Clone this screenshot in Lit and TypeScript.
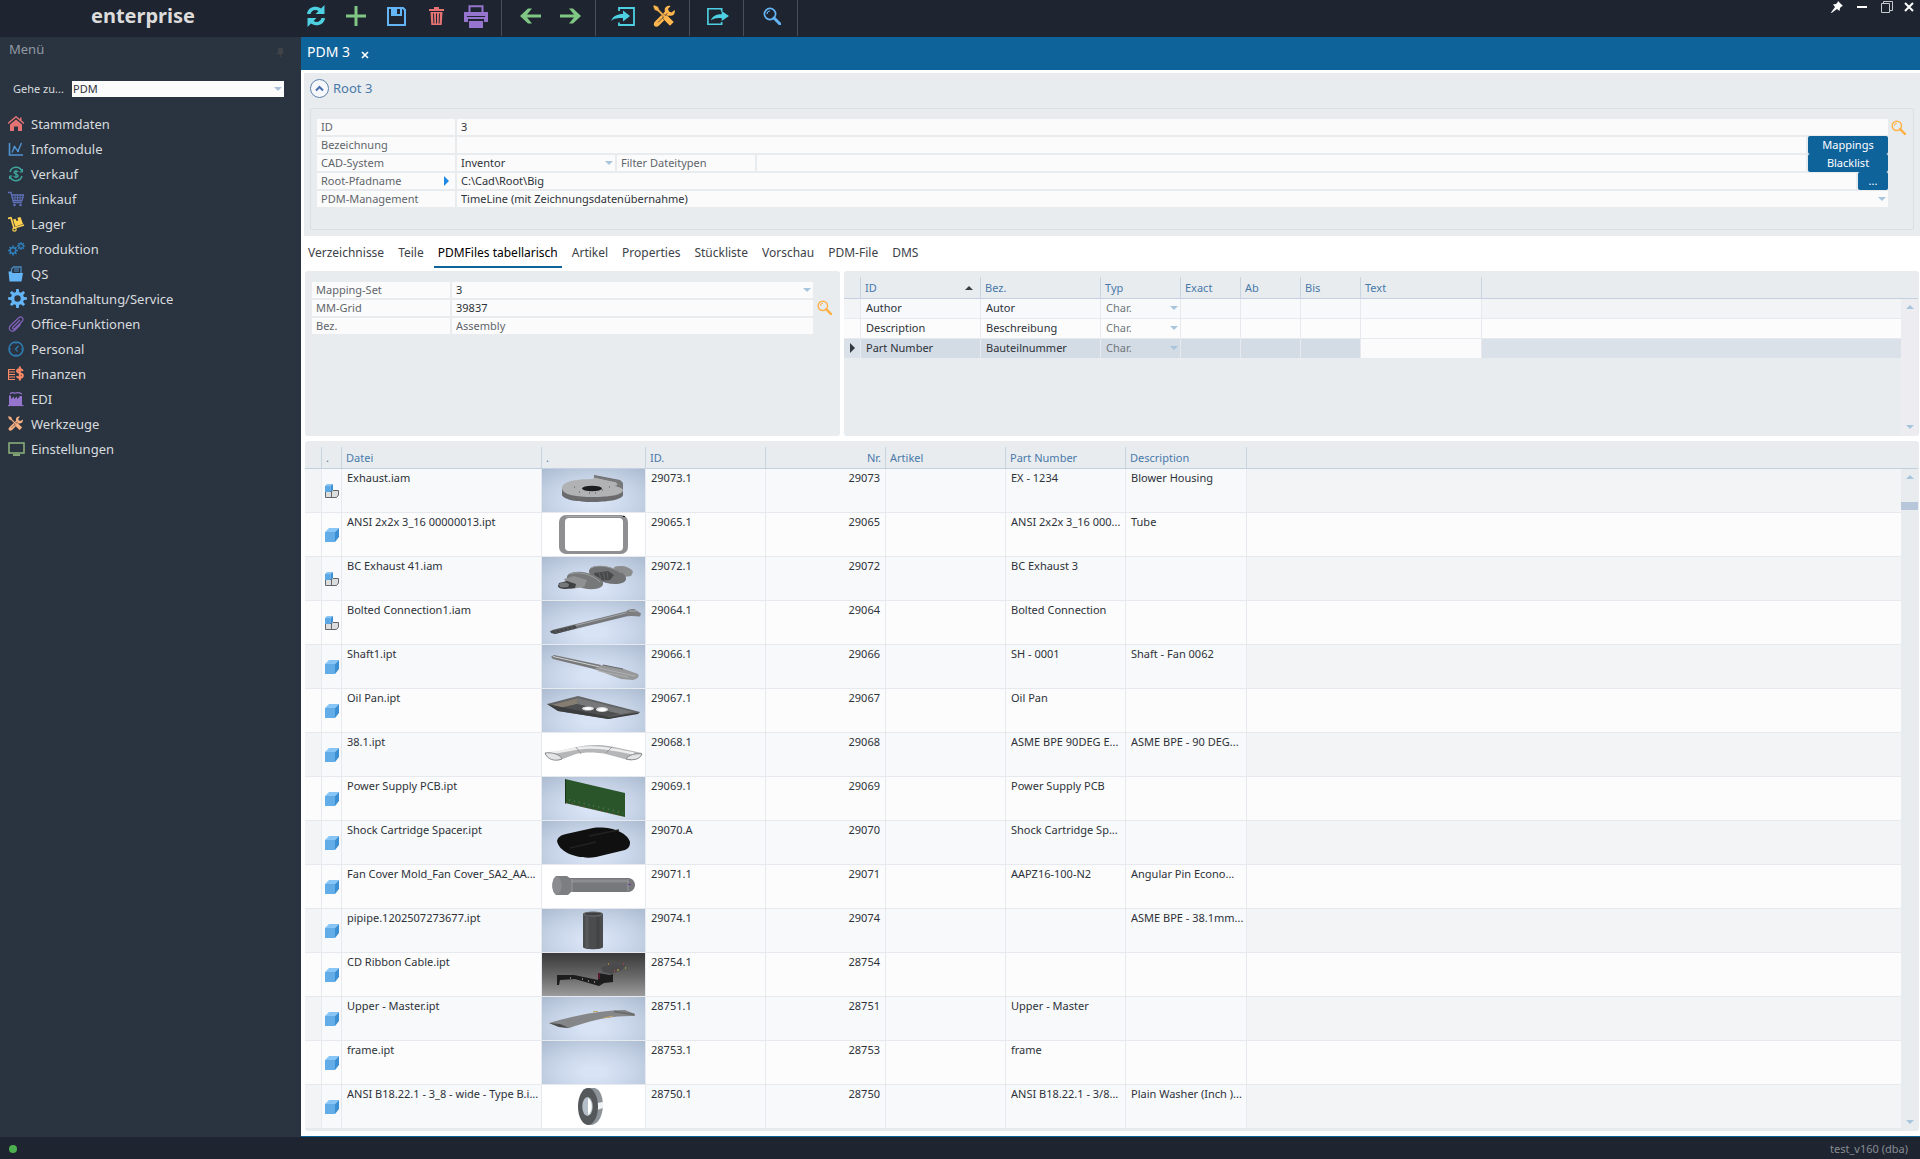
import { LitElement, html, svg, css, nothing } from "lit";
import { customElement, state } from "lit/decorators.js";
import { classMap } from "lit/directives/class-map.js";

/** Builds a toothed wheel outline with a round hole (even-odd fill). */
function gear(cx: number, cy: number, outer: number, inner: number, hole: number, teeth: number): string {
  const step = (Math.PI * 2) / teeth;
  const pts: string[] = [];
  for (let i = 0; i < teeth; i++) {
    const a = i * step - Math.PI / 2;
    for (const [r, o] of [[inner, -0.3], [outer, -0.18], [outer, 0.18], [inner, 0.3]]) {
      pts.push(`${(cx + r * Math.cos(a + o * step)).toFixed(2)} ${(cy + r * Math.sin(a + o * step)).toFixed(2)}`);
    }
  }
  return `M${pts.join("L")}Z M${cx - hole} ${cy}a${hole} ${hole} 0 1 0 ${hole * 2} 0a${hole} ${hole} 0 1 0 ${-hole * 2} 0Z`;
}

const toolsShape = svg`
  <path d="M21.500 5l-3 2.500-2.500-1-1-2.500L17.500 1c-3.500-1-7 2-5.500 5.500L2 16.500c-1.500 1.500-1.500 3.500-.5 4.500s3 1 4.500-.5l10-10c3.500 1.500 7-2 5.500-5.500z" fill="currentColor"/>
  <path d="M5 17.500l9.500-9.500" stroke="#1f2530" stroke-width="0.700" fill="none"/>
  <path d="M1 0l4 1.500 1.500 3.500 5.500 5.500 1.500-.5 1.500 1 6 6-4 4-6-6-1-1.500.5-1.500L5 6.500 1.500 5 0 1z" fill="currentColor" stroke="#1f2530" stroke-width="0.500"/>`;

const glass = svg`
  <circle cx="7" cy="7" r="5.600" fill="none" stroke="currentColor" stroke-width="1.700"/>
  <path d="M4 7a3 3 0 0 1 3-3" fill="none" stroke="currentColor" stroke-width="1.200"/>
  <path d="M11 11l6 6" stroke="currentColor" stroke-width="3" stroke-linecap="round"/>`;

const icon = (w: number, h: number, box: string, color: string, body: unknown) =>
  html`<svg width=${w} height=${h} viewBox=${box} style="color:${color}" aria-hidden="true">${body}</svg>`;

const caret = (dir: "down" | "up" | "right", cls = "caret") => {
  const d = { down: "M0 1h8l-4 4z", up: "M0 5h8l-4-4z", right: "M1 0v10l5-5z" }[dir];
  return html`<svg class=${cls} width=${dir === "right" ? 6 : 8} height=${dir === "right" ? 10 : 6} aria-hidden="true"><path d=${d} fill="currentColor"/></svg>`;
};

const base = css`
  * { box-sizing: border-box; }
  button, input, select { font: inherit; color: inherit; margin: 0; padding: 0; border: 0; background: none; border-radius: 0; outline-offset: -1px; }
  button { cursor: pointer; }
  select { appearance: none; min-width: 0; }
  svg { display: block; flex: none; }
`;

interface Tool { label: string; art: unknown; }

@customElement("app-toolbar")
export class AppToolbar extends LitElement {
  static styles = [base, css`
    :host { display: flex; height: 37px; background: #1f2530; color: #fff; }
    .brand { width: 288px; padding-right: 2px; text-align: center; font: 700 20px/32px "Noto Sans", "Open Sans", sans-serif; color: #dcdcdc; }
    .group { display: flex; padding: 0 5px 0 8px; border-right: 1px solid #4a4f59; height: 36px; }
    .tool { width: 40px; height: 34px; display: grid; place-items: center; padding-bottom: 2px; }
    .window { margin-left: auto; display: flex; align-items: flex-start; padding-right: 1px; }
    .window button { width: 25px; height: 14px; display: grid; place-items: center; }
    .window .last { width: 20px; }
  `];

  private groups: Tool[][] = [
    [
      { label: "Aktualisieren", art: icon(20, 22, "0 0 20 22", "#4dd0e1", svg`
        <path d="M1 9C2 1.500 10 0 15 3.500L18.500 0v9h-9l3-3C9 4 5.500 5.500 4.500 9z" fill="currentColor"/>
        <path d="M19 13c-1 7.500-9 9-14 5.500L1.500 22v-9h9l-3 3c3.500 2 7 .5 8-3z" fill="currentColor"/>`) },
      { label: "Neu", art: icon(20, 20, "0 0 20 20", "#81c784", svg`<path d="M8.500 0h3v8.500H20v3h-8.500V20h-3v-8.500H0v-3h8.500z" fill="currentColor"/>`) },
      { label: "Speichern", art: icon(19, 19, "0 0 19 19", "#64b5f6", svg`
        <path d="M1 1h15l2 2v15H1z" fill="none" stroke="currentColor" stroke-width="2"/>
        <path d="M4 1h11v8H4z" fill="currentColor"/><path d="M10 2h3v5h-3z" fill="#1f2530"/>`) },
      { label: "Löschen", art: icon(15, 20, "0 0 15 20", "#e57373", svg`
        <path d="M0 3h15v2H0z M5 1h5v2H5z" fill="currentColor"/>
        <path d="M1.500 6h12l-.8 13H2.300z" fill="currentColor"/>
        <path d="M4.500 7.500l.4 10M7.500 7.500v10M10.500 7.500l-.4 10" stroke="#1f2530" stroke-width="1"/>`) },
      { label: "Drucken", art: icon(24, 23, "0 0 24 23", "#9575cd", svg`
        <path d="M5.500 7V1.200h13V7" fill="none" stroke="currentColor" stroke-width="2"/>
        <path d="M0 7h24v10h-4v-3H4v3H0z M5 16h14v7H5z" fill="currentColor"/>
        <path d="M3 11.500h18" stroke="#1f2530" stroke-width="1"/>`) },
    ],
    [
      { label: "Zurück", art: icon(21, 16, "0 0 21 16", "#81c784", svg`<path d="M21 6.500v3H7l5 6H8L0 8l8-7.500h4l-5 6z" fill="currentColor"/>`) },
      { label: "Vor", art: icon(21, 16, "0 0 21 16", "#81c784", svg`<path d="M0 6.500v3h14l-5 6h4L21 8 13 .5H9l5 6z" fill="currentColor"/>`) },
    ],
    [
      { label: "Importieren", art: icon(26, 19, "0 0 26 19", "#4dd0e1", svg`
        <path d="M8 4V1h15v17H8v-2.500" fill="none" stroke="currentColor" stroke-width="1.800"/>
        <path d="M0 14c2-5 6-7 12-7V3.500L19 9l-7 5.500V11c-5 0-9 0-12 3z" fill="currentColor"/>`) },
      { label: "Werkzeuge", art: icon(22, 22, "0 0 22 22", "#ffb74d", toolsShape) },
    ],
    [
      { label: "Exportieren", art: icon(22, 19, "0 0 24 19", "#4dd0e1", svg`
        <path d="M16 4V1H1v17h15v-2.500" fill="none" stroke="currentColor" stroke-width="1.800"/>
        <path d="M4 14c2-5 6-7 12-7V3.500L24 9l-8 5.500V11c-5 0-9 0-12 3z" fill="currentColor"/>`) },
    ],
    [{ label: "Suchen", art: icon(18, 18, "0 0 18 18", "#64b5f6", glass) }],
  ];

  render() {
    return html`
      <div class="brand">enterprise</div>
      ${this.groups.map((g) => html`<div class="group">
        ${g.map((t) => html`<button class="tool" aria-label=${t.label}>${t.art}</button>`)}
      </div>`)}
      <div class="window">
        <button aria-label="Anheften">${icon(12, 12, "0 0 12 12", "#fff", svg`<path d="M7 0l5 5-1.500.5-1.500 1.500-.5 3L6 8 .5 12 0 11.500 4 6 2 3.500l3-.5 1.500-1.500z" fill="currentColor"/>`)}</button>
        <button aria-label="Minimieren">${icon(10, 12, "0 0 10 12", "#fff", svg`<path d="M0 5h10v2H0z" fill="currentColor"/>`)}</button>
        <button aria-label="Wiederherstellen">${icon(12, 12, "0 0 12 12", "#c8cacd", svg`<path d="M.5 2.500h8v9h-8z M2.500 2.500v-2h9v9h-3" fill="none" stroke="currentColor"/>`)}</button>
        <button class="last" aria-label="Schließen">${icon(10, 10, "0 0 10 10", "#fff", svg`<path d="M1 1l8 8M9 1l-8 8" stroke="currentColor" stroke-width="2"/>`)}</button>
      </div>`;
  }
}

@customElement("app-sidebar")
export class AppSidebar extends LitElement {
  static styles = [base, css`
    :host { display: block; background: #2a3441; color: #d9dcdf; font-size: 13px; line-height: 20px; }
    .title { display: flex; justify-content: space-between; align-items: flex-start; padding: 2px 17px 0 9px; color: #9299a1; height: 26px; margin: 0; font-weight: 400; font-size: 13px; }
    .pin { padding-top: 9px; }
    .goto { display: flex; align-items: center; padding: 18px 17px 0 13px; font-size: 11px; line-height: 16px; }
    .goto label { width: 59px; }
    .pick { flex: 1; display: flex; align-items: center; background: #fbfbfb; color: #2d3238; height: 16px; padding-right: 2px; }
    .pick select { flex: 1; height: 16px; padding-left: 1px; }
    .caret { color: #a9c2da; }
    ul { list-style: none; margin: 0; padding: 14px 0 0; }
    a { display: flex; align-items: center; height: 25px; padding-left: 7px; color: inherit; text-decoration: none; }
    .glyph { width: 24px; height: 21px; display: grid; place-items: center; justify-items: start; padding-left: 1px; }
  `];

  private items: [string, unknown][] = [
    ["Stammdaten", icon(16, 16, "0 0 16 16", "#e57373", svg`
      <path d="M0 7.500L8 .8l8 6.700M12.800 4.500V1.500" fill="none" stroke="currentColor" stroke-width="1.500"/>
      <path d="M2 8.500l6-5 6 5V15H10v-4.500H6V15H2z" fill="currentColor"/>`)],
    ["Infomodule", icon(16, 16, "0 0 16 16", "#4f93d2", svg`
      <path d="M1.500 2v12H15" fill="none" stroke="currentColor" stroke-width="1.600"/>
      <path d="M4 11.500L6.500 6l3.500 4 3.500-8" fill="none" stroke="currentColor" stroke-width="1.400"/>
      <circle cx="6.500" cy="6" r="1.200" fill="currentColor"/><circle cx="10" cy="10" r="1.200" fill="currentColor"/>`)],
    ["Verkauf", icon(16, 16, "0 0 16 16", "#3fa79e", svg`
      <path d="M2 6a6.300 6.300 0 0 1 12-.5M14 10a6.300 6.300 0 0 1-12 .5" fill="none" stroke="currentColor" stroke-width="1.500"/>
      <path d="M14.500 3v3h-3M1.500 13v-3h3" fill="none" stroke="currentColor"/>
      <path d="M10.200 6C9.500 4.800 6 4.800 6 6.400S10.200 8 10.200 9.800 6.800 11.500 5.600 10.300M8 3.800v8.500" fill="none" stroke="currentColor" stroke-width="1.200"/>`)],
    ["Einkauf", icon(16, 16, "0 0 16 16", "#5f70b8", svg`
      <path d="M0 1.500h3l2.500 10H14M4 4h11.500L14 9.500H5.500" fill="none" stroke="currentColor" stroke-width="1.300"/>
      <path d="M7 4v6M9.500 4v6M12 4v6M4.500 6.700H15" stroke="currentColor" stroke-width="0.900"/>
      <circle cx="6.500" cy="14" r="1.300" fill="currentColor"/><circle cx="12.500" cy="14" r="1.300" fill="currentColor"/>`)],
    ["Lager", icon(17, 16, "0 0 17 16", "#fdd04e", svg`
      <path d="M0 2.500l3-.8L6 12l10-3" fill="none" stroke="currentColor" stroke-width="1.700"/>
      <circle cx="6.500" cy="13.500" r="1.700" fill="none" stroke="currentColor" stroke-width="1.200"/>
      <path d="M5 3.500l2.500-.8 1 2.200 1.700-.5-.8-2.600L12.500 1l2.500 7L7.300 10.500z" fill="currentColor"/>`)],
    ["Produktion", icon(17, 16, "0 0 17 16", "#2f80bd", svg`
      <path fill-rule="evenodd" d=${gear(5, 9.5, 5, 3.6, 2, 8)} fill="currentColor"/>
      <path fill-rule="evenodd" d=${gear(13, 5, 4, 2.8, 1.6, 8)} fill="currentColor"/>`)],
    ["QS", icon(16, 16, "0 0 16 16", "#64b5f6", svg`
      <path d="M3.500 6V3l2-2h7.500v6" fill="none" stroke="#4b89c0" stroke-width="1.300"/>
      <path d="M6 3h5M6 5h5" stroke="#4b89c0"/>
      <path d="M.5 5.500h3l1 1.500H15l-1.500 8.500h-12z" fill="currentColor"/>`)],
    ["Instandhaltung/Service", icon(19, 19, "0 0 19 19", "#64b5f6", svg`<path fill-rule="evenodd" d=${gear(9.5, 9.5, 9.5, 6.6, 3.2, 8)} fill="currentColor"/>`)],
    ["Office-Funktionen", icon(16, 16, "0 0 16 16", "#8563bd", svg`
      <path d="M12 4l-7 7c-1.500 1.500.5 3 2 1.500l7-7c2.500-3-.5-6-3.500-3.500L2.500 9.500c-3.500 4 1.500 7.500 4.500 4.500l5.500-5.500" fill="none" stroke="currentColor" stroke-width="1.200"/>`)],
    ["Personal", icon(16, 16, "0 0 16 16", "#2f7fb8", svg`
      <circle cx="8" cy="8" r="7" fill="none" stroke="currentColor" stroke-width="1.500"/>
      <path d="M10.500 5L7.500 8l2 2.500" fill="none" stroke="currentColor" stroke-width="1.200"/>
      <path d="M8 2v1M8 13v1M2 8h1M13 8h1" stroke="currentColor"/>`)],
    ["Finanzen", icon(16, 16, "0 0 16 16", "#ff8a65", svg`
      <path d="M0 3.500h7M0 6h7M0 8.500h7M0 11h7M0 13.500h7M.5 3v11" stroke="currentColor" stroke-width="1.200"/>
      <path d="M14.800 5C13.500 2.500 8.800 3 9 5.200s5.800 1.500 5.800 4.300-4.800 2.800-6.200.8M11.800.5v14" fill="none" stroke="currentColor" stroke-width="2"/>`)],
    ["EDI", icon(16, 16, "0 0 16 16", "#9575cd", svg`
      <path d="M0 14.500h15.500" stroke="currentColor" stroke-width="1.200"/>
      <path d="M1 14V4.500h2V8l3-2.500V8l3-2.500V8l2.500-2V5H14v9z" fill="currentColor"/>
      <path d="M2 3c2-3 4 0 6-1s4 0 6 1" fill="none" stroke="currentColor" stroke-width="1.200"/>`)],
    ["Werkzeuge", icon(15, 15, "0 0 22 22", "#f7b183", toolsShape)],
    ["Einstellungen", icon(17, 16, "0 0 17 16", "#8fb27c", svg`
      <path d="M1 2h15v10H1z" fill="none" stroke="currentColor" stroke-width="1.500"/><path d="M5 14h7" stroke="currentColor" stroke-width="1.800"/>`)],
  ];

  render() {
    return html`
      <h2 class="title">Menü <span class="pin">${icon(8, 9, "0 0 8 9", "#3f4247", svg`<path d="M2 0h5v5h1v1H5v3H4V6H0V5h2z" fill="currentColor"/>`)}</span></h2>
      <div class="goto">
        <label for="goto">Gehe zu...</label>
        <span class="pick"><select id="goto"><option>PDM</option></select>${caret("down")}</span>
      </div>
      <nav><ul>
        ${this.items.map(([name, art]) => html`<li><a href="#"><span class="glyph">${art}</span>${name}</a></li>`)}
      </ul></nav>`;
  }
}

const mist = "mist", plain = "plain", night = "night";

interface FileRow {
  kind: "iam" | "ipt"; file: string; id: string; nr: string; part: string; desc: string; tone: string; art: unknown;
}

const files: FileRow[] = [
  { kind: "iam", file: "Exhaust.iam", id: "29073.1", nr: "29073", part: "EX - 1234", desc: "Blower Housing", tone: mist, art: svg`
    <path d="M20 19v7c2 5 16 7 30 7s30-2 31-7V14l-3-3-26-5v4z" fill="#6b6b6d"/>
    <path d="M20 19c0-6 12-9 31-9l1-2 22 5 2 3-3 1c6 1 8 3 8 4 0 5-14 7-30 7S20 26 20 19z" fill="#b1b2b4"/>
    <path d="M52 6.500l26 5 3 3v6l-5-4-1-3-23-5z" fill="#77787a"/>
    <ellipse cx="50" cy="19.500" rx="10" ry="2.800" fill="#1d1d1e"/>
    <path d="M32 18h1M37 23h1M47 24h1M53 24h1M67 18h1M60 21h1" stroke="#555"/>` },
  { kind: "ipt", file: "ANSI 2x2x 3_16 00000013.ipt", id: "29065.1", nr: "29065", part: "ANSI 2x2x 3_16 000...", desc: "Tube", tone: plain, art: svg`
    <rect x="17" y="2" width="69" height="39" rx="7" fill="#8f8f91"/><rect x="23" y="5" width="58" height="33" rx="4" fill="#fff"/>
    <path d="M24 3.500h55" stroke="#a9a9aa"/><path d="M81 3.500h2" stroke="#111"/>` },
  { kind: "iam", file: "BC Exhaust 41.iam", id: "29072.1", nr: "29072", part: "BC Exhaust 3", desc: "", tone: mist, art: svg`
    <path d="M72 10c6-2 16-1 19 5l-2 4-14 2z" fill="#8b8c8e"/>
    <ellipse cx="65.500" cy="18" rx="19" ry="8" transform="rotate(14 65.500 18)" fill="#707173"/>
    <path d="M49 11c8-4 22-1 30 5" fill="none" stroke="#929395"/>
    <path d="M52 16l14-2 6 4-4 5-14 1z" fill="#48494b"/><path d="M57 15l2 8M61 15l2 8M65 15l1 7" stroke="#66676a" stroke-width="0.800"/>
    <ellipse cx="43" cy="23.500" rx="18.500" ry="8" transform="rotate(12 43 23.500)" fill="#77787a"/>
    <path d="M28 17c8-3 22 0 30 8" fill="none" stroke="#9b9c9e"/>
    <path d="M22 22l10-3 13 4-3 7-14 2z" fill="#8f9092"/><path d="M17 26l8-2 9 3-1 4-9 1c-5 0-8-1-8-3z" fill="#3f4042"/>
    <ellipse cx="22" cy="28" rx="5" ry="2.500" fill="#77787a"/>` },
  { kind: "iam", file: "Bolted Connection1.iam", id: "29064.1", nr: "29064", part: "Bolted Connection", desc: "", tone: mist, art: svg`
    <path d="M10 29l74-18.500 4 4L13 33z" fill="#75777a"/><path d="M11 30l75-18.500" stroke="#a4a6a9" stroke-width="1"/>
    <path d="M8 30l25-6 2 3-22 6-4-1z" fill="#47484a"/><path d="M13 29l2 4M17 28l2 4M21 27l2 4M25 26l2 4M29 25l2 4" stroke="#66676a" stroke-width="0.700"/>
    <path d="M84 10.500c2-2 6-3 9-2l6 4-1 3c-4 0-8-1-12 0z" fill="#7d7e80"/><path d="M87 10h8" stroke="#aaa"/>` },
  { kind: "ipt", file: "Shaft1.ipt", id: "29066.1", nr: "29066", part: "SH - 0001", desc: "Shaft - Fan 0062", tone: mist, art: svg`
    <path d="M9 12l3-2 47 10-3 5L11 14z" fill="#77787a"/><path d="M11 11.500l47 10.500" stroke="#d0d1d3"/>
    <path d="M52 24l8-4 22 4 14 5c2 3-1 5-5 6l-12-1z" fill="#97989a"/><path d="M57 23l36 8M56 26l30 6" stroke="#b4b5b7" stroke-width="0.800"/><path d="M61 20l20 4" stroke="#66676a"/>` },
  { kind: "ipt", file: "Oil Pan.ipt", id: "29067.1", nr: "29067", part: "Oil Pan", desc: "", tone: mist, art: svg`
    <path d="M5 15l31-8 62 16-31 7L16 22z" fill="#636466"/><path d="M10 16l26-7-1 6-21 5z" fill="#857c72"/><path d="M36 9l55 14-13 2-43-10z" fill="#77787a"/>
    <path d="M14 20l21-5 43 10-14 3z" fill="#4e4f51"/><path d="M5 15l62 13 31-5-2 2-30 5L16 22z" fill="#3c3d3f"/>
    <ellipse cx="46" cy="19.500" rx="6" ry="2" fill="#dcdcdc"/><ellipse cx="46" cy="19.500" rx="3.500" ry="1.300" fill="#fff"/>
    <ellipse cx="60" cy="20.500" rx="6" ry="2.500" fill="#dcdcdc"/><ellipse cx="60" cy="20.500" rx="4" ry="1.500" fill="#fff"/>` },
  { kind: "ipt", file: "38.1.ipt", id: "29068.1", nr: "29068", part: "ASME BPE 90DEG E...", desc: "ASME BPE - 90 DEG...", tone: plain, art: svg`
    <path d="M3 20c10-1 20-3 32-6 11-2 22-3 37 0l28 6c0 5-7 8-14 7l-22-6c-10-2-22-2-30 0l-16 6c-8 1-13-2-15-7z" fill="#b5b6b8"/>
    <path d="M8 20c18-2 24-5 38-5.500s26 2 46 6" fill="none" stroke="#ededed" stroke-width="2.500"/>
    <path d="M3 20c6-1 15 1 17 6-8 3-15 0-17-6zM100 21c-6-1-14 1-16 5 8 2 14 0 16-5z" fill="#e3e4e6" stroke="#77787a" stroke-width="0.800"/>
    <path d="M34 14l5 7M64 20l6-6" stroke="#8b8c8e" stroke-width="0.800"/>` },
  { kind: "ipt", file: "Power Supply PCB.ipt", id: "29069.1", nr: "29069", part: "Power Supply PCB", desc: "", tone: mist, art: svg`
    <path d="M23 2l60 14v24L23 26z" fill="#2a5429"/><path d="M23.500 2.500v24" stroke="#173417"/>
    <path d="M24 25.500l58 14" stroke="#b04a43" stroke-width="1" stroke-dasharray="1 5"/><path d="M27 23l54 13" stroke="#4f744e" stroke-dasharray="1 4" stroke-width="2"/>` },
  { kind: "ipt", file: "Shock Cartridge Spacer.ipt", id: "29070.A", nr: "29070", part: "Shock Cartridge Sp...", desc: "", tone: mist, art: svg`
    <path d="M15 20c1-4 4-6 9-7l27-6c17-2 34 4 37 14 0 4-1 6-5 8l-29 7c-16 3-37-4-39-16z" fill="#101011"/>
    <path d="M47 15l30-6M28 27l26-6" stroke="#222223" stroke-width="1.500"/>` },
  { kind: "ipt", file: "Fan Cover Mold_Fan Cover_SA2_AA...", id: "29071.1", nr: "29071", part: "AAPZ16-100-N2", desc: "Angular Pin Econo...", tone: plain, art: svg`
    <path d="M26 13h61c4 1 6 4 6 7s-2 6-6 7H26z" fill="#77787b"/><path d="M28 16h58" stroke="#8b8c8f" stroke-width="3"/>
    <path d="M14 11h11l4 3v13l-3 3H14c-5-4-5-15 0-19z" fill="#7d7e82"/><ellipse cx="15" cy="20.500" rx="4.500" ry="9" fill="#8b8c90"/>
    <path d="M86 14v12M30 14v13" stroke="#98999c"/><path d="M86 19.500h3" stroke="#6d3f9a"/>` },
  { kind: "ipt", file: "pipipe.1202507273677.ipt", id: "29074.1", nr: "29074", part: "", desc: "ASME BPE - 38.1mm...", tone: mist, art: svg`
    <path d="M41 5c0-3 20-3 20 0v33c0 3-20 3-20 0z" fill="#4b4c4d"/><path d="M45 8v31" stroke="#58595b" stroke-width="3"/><path d="M56 8v31" stroke="#424344" stroke-width="3"/>
    <ellipse cx="51" cy="5" rx="9.500" ry="2" fill="#3f4041" stroke="#77787a" stroke-width="0.800"/>` },
  { kind: "ipt", file: "CD Ribbon Cable.ipt", id: "28754.1", nr: "28754", part: "", desc: "", tone: night, art: svg`
    <path d="M15 22h17l24 5V20l12 2 3-1v8l-9 1-5 3-24-7-15 1-1 5h-2z" fill="#1d1d1e"/>
    <path d="M59 15c5-4 17-5 25-4l-4 6-11 4-8-2z" fill="#4b4b4d"/><path d="M57 20v6" stroke="#93154a"/><path d="M66 11h1M75 17h2M83 15h1" stroke="#e2b93f"/><path d="M72 18h1M81 11h1" stroke="#d2453c"/>
    <path d="M28 25h1M40 26h1M46 28h1M52 29h1" stroke="#ddd"/>` },
  { kind: "ipt", file: "Upper - Master.ipt", id: "28751.1", nr: "28751", part: "Upper - Master", desc: "", tone: mist, art: svg`
    <path d="M7 26c20-6 50-13 76-13l10 4v2c-24-1-45 5-66 12l-10-1z" fill="#858687"/><path d="M7 26l10 4 10 1-9-4z" fill="#4b4c4d"/>
    <path d="M72 14.500l20 3" stroke="#6c6d6e" stroke-width="2"/><path d="M51 14.500h5M62 21l9-2" stroke="#c6a969"/>` },
  { kind: "ipt", file: "frame.ipt", id: "28753.1", nr: "28753", part: "frame", desc: "", tone: mist, art: nothing },
  { kind: "ipt", file: "ANSI B18.22.1 - 3_8 - wide - Type B.i...", id: "28750.1", nr: "28750", part: "ANSI B18.22.1 - 3/8...", desc: "Plain Washer (Inch )...", tone: plain, art: svg`
    <path d="M46 3h7c11 3 11 34-3 37h-5z" fill="#8d9499"/><path d="M55 18l6-1v6l-6 2z" fill="#f0f3f5"/>
    <ellipse cx="46" cy="21.500" rx="10" ry="18.500" fill="#55585b"/><ellipse cx="45.500" cy="21.500" rx="5.200" ry="9.500" fill="#b4bfc9"/><path d="M46 13c5 3 5 14 0 17z" fill="#fff"/>` },
];

const partIcon = icon(14, 14, "0 0 14 14", "#64b0ea", svg`
  <path d="M0 4h10v10H0z" fill="#62ade8"/><path d="M0 4L4 0h10l-4 4z" fill="#87c5f7"/><path d="M10 4l4-4v9l-4 5z" fill="#3b8fd2"/>`);
const assemblyIcon = icon(14, 14, "0 0 14 14", "#63676b", svg`
  <path d="M7 7.500L8 6.500h5.500V11L11.500 13.500H.5v-6z" fill="#dcdddd" stroke="currentColor"/><path d="M6.500 8v5.500" stroke="currentColor"/>
  <path d="M0 2h5.500v6H0z" fill="#5ba8e5"/><path d="M0 2l2-2h6L5.500 2z" fill="#87c5f7"/><path d="M5.500 2L8 0v6L5.500 8z" fill="#3b8fd2"/>`);

@customElement("app-root")
export class AppRoot extends LitElement {
  static styles = [base, css`
    :host {
      display: flex; flex-direction: column; min-height: 100vh; background: #fff; color: #2d3238;
      font: 11px/16px "Noto Sans", "Open Sans", sans-serif;
    }
    .body { flex: 1; display: grid; grid-template-columns: 301px minmax(0, 1fr); }
    main { display: flex; flex-direction: column; border-bottom: 1px solid #0f639b; }
    .doc-tabs { display: flex; align-items: center; gap: 11px; height: 33px; padding: 0 6px; background: #0f639b; color: #fff; font-size: 14px; }
    .doc-tabs a { color: inherit; text-decoration: none; padding-bottom: 4px; }
    .doc-tabs button { padding-top: 2px; }
    .root { margin: 3px 0 0 3px; padding: 6px; background: #e8ecef; }
    .root-head { display: flex; align-items: center; gap: 4px; color: #4a79a9; font-size: 13px; height: 19px; }
    .root-head h1 { font: inherit; margin: 0; padding-bottom: 1px; }
    .group { margin-top: 10px; border: 1px solid #dadfe3; border-radius: 2px; padding: 10px 7px 22px 6px; display: flex; gap: 3px; }
    .fields { flex: 1; min-width: 0; display: flex; flex-direction: column; gap: 2px; }
    .field { display: flex; gap: 2px; height: 16px; align-items: center; }
    .field label { width: 138px; height: 16px; padding: 0 6px 0 4px; background: #fbfbfb; color: #5f656b; display: flex; align-items: center; justify-content: space-between; }
    .box { flex: 1; min-width: 0; height: 16px; background: #fbfbfb; display: flex; align-items: center; padding-right: 2px; }
    .box input, .box select { flex: 1; width: 100%; min-width: 0; height: 16px; padding-left: 4px; }
    .narrow { flex: 0 0 158px; }
    .muted { color: #5f656b; }
    .caret { color: #a9c5dc; }
    .hint { color: #1e88e5; }
    .action { width: 80px; height: 18px; background: #0f639b; color: #fff; border-radius: 2px; }
    .action.more { width: 30px; }
    .find { width: 15px; height: 15px; align-self: flex-start; margin-top: 1px; color: #ffb14a; }
    .tabs { display: flex; gap: 6px; padding-left: 3px; height: 35px; font-size: 12px; line-height: 16px; }
    .tabs a { height: 32px; padding: 9px 4px 5px; color: #3c4248; text-decoration: none; border-bottom: 2px solid transparent; white-space: nowrap; }
    .tabs .active { color: #000; border-color: #0f639b; }
    .split { display: flex; gap: 4px; margin: 0 1px 5px 4px; height: 165px; }
    .panel { background: #e8ecef; border-radius: 3px; overflow: hidden; }
    .mapping { flex: 0 1 535px; display: flex; gap: 4px; padding: 11px 8px 0 7px; }
    .mapping .find { margin-top: 18px; }
    .grid-panel { display: flex; padding: 6px 1px 0 0; min-width: 0; }
    .props { flex: 1; }
    .files { flex: 1; margin: 0 1px 5px 4px; }
    .view { flex: 1; min-width: 0; }
    table { width: 100%; table-layout: fixed; border-spacing: 0; }
    th { height: 22px; padding: 0 4px; text-align: left; font-weight: 400; color: #4a79a9; border-right: 1px solid #c9d4e1; border-bottom: 1px solid #c3d0df; white-space: nowrap; }
    th:last-child, td:last-child { border-right: 0; }
    .sort { display: flex; align-items: center; justify-content: space-between; padding-right: 3px; color: #4a79a9; width: 100%; }
    .sort svg { color: #3a3f45; }
    td { padding: 0 5px; background: #f7f9fb; border-right: 1px solid #e6eaee; border-bottom: 1px solid #e6eaee; white-space: nowrap; overflow: hidden; text-overflow: clip; }
    td:first-child, td:last-child { background: #f3f4f6; }
    tr:nth-child(even) td { background: #fcfcfc; }
    .props td { height: 20px; padding-bottom: 2px; }
    .props .current td { background: #d3dbe5; border-bottom-color: #e8ecef; }
    .props .current td:first-child, .props .current td:last-child { background: #dae1e9; }
    .props .current td.edit { background: #fbfbfb; padding: 0; }
    .edit input { width: 100%; height: 18px; padding: 0 5px; display: block; }
    .type { display: flex; align-items: center; color: #70767c; margin-right: -3px; }
    .type select { flex: 1; }
    .marker { color: #33383e; }
    .files td { height: 44px; vertical-align: top; padding-top: 1px; }
    .files td.kind { padding: 15px 0 0 3px; }
    .files td.thumb { padding: 0; }
    .num { text-align: right; }
    td.num { padding-right: 5px; }
    .shot { height: 43px; }
    .shot svg { width: 100%; height: 43px; }
    .mist { background: radial-gradient(ellipse 75% 95% at 50% 72%, #d8e3f5 15%, #c4d1e5 60%, #a5b6cb 110%); }
    .plain { background: #fff; }
    .night { background: linear-gradient(#39393a, #6e6e6f 60%, #9b9b9c); }
    .bar { width: 17px; display: flex; flex-direction: column; justify-content: space-between; color: #b4c4d8; }
    .bar .cap { height: 22px; border-bottom: 1px solid #c3d0df; background: #e8ecef; }
    .bar .rail { flex: 1; background: #ededf1; display: flex; flex-direction: column; align-items: center; padding: 5px 0 6px; }
    .files .rail { background: #e8ecef; }
    .bar .thumb-bar { width: 17px; height: 8px; background: #b8c6d9; margin-top: 22px; }
    .bar .rail svg:last-child { margin-top: auto; }
    footer { display: flex; align-items: center; justify-content: space-between; height: 22px; padding: 1px 12px 0 9px; background: #1f2530; color: #878c94; }
    .dot { width: 8px; height: 8px; border-radius: 50%; background: #4caf50; }
  `];

  @state() private active = "PDMFiles tabellarisch";

  private tabs = ["Verzeichnisse", "Teile", "PDMFiles tabellarisch", "Artikel", "Properties", "Stückliste", "Vorschau", "PDM-File", "DMS"];
  private props = [["Author", "Autor"], ["Description", "Beschreibung"], ["Part Number", "Bauteilnummer"]];

  private text(id: string, value: string, cls = "") {
    return html`<span class="box ${cls}"><input id=${id} .value=${value}></span>`;
  }
  private choice(id: string, value: string, cls = "") {
    return html`<span class="box ${cls}"><select id=${id}><option>${value}</option></select>${caret("down")}</span>`;
  }
  private rail(thumb: boolean) {
    return html`<div class="bar"><div class="cap"></div><div class="rail">${caret("up")}${thumb ? html`<div class="thumb-bar"></div>` : nothing}${caret("down")}</div></div>`;
  }
  private find() {
    return html`<button class="find" aria-label="Suchen">${icon(15, 15, "0 0 18 18", "#ffb14a", glass)}</button>`;
  }
  private pick(e: Event, name: string) {
    e.preventDefault();
    this.active = name;
  }

  private rootForm() {
    return html`<section class="root">
      <div class="root-head">
        <button aria-label="Einklappen">${icon(19, 19, "0 0 19 19", "#5f83ab", svg`
          <circle cx="9.500" cy="9.500" r="9" fill="#f5f7fa" stroke="currentColor"/><path d="M6 11.500l3.500-3.500 3.500 3.500" fill="none" stroke="#4a6fae" stroke-width="2"/>`)}</button>
        <h1>Root 3</h1>
      </div>
      <div class="group">
        <div class="fields">
          <div class="field"><label for="rid">ID</label>${this.text("rid", "3")}</div>
          <div class="field"><label for="bez">Bezeichnung</label>${this.text("bez", "")}<button class="action">Mappings</button></div>
          <div class="field"><label for="cad">CAD-System</label>${this.choice("cad", "Inventor", "narrow")}
            <label for="filter">Filter Dateitypen</label>${this.text("filter", "")}<button class="action">Blacklist</button></div>
          <div class="field"><label for="path">Root-Pfadname ${caret("right", "hint")}</label>${this.text("path", "C:\\Cad\\Root\\Big")}<button class="action more">...</button></div>
          <div class="field"><label for="mgmt">PDM-Management</label>${this.choice("mgmt", "TimeLine (mit Zeichnungsdatenübernahme)")}</div>
        </div>
        ${this.find()}
      </div>
    </section>`;
  }

  private mapping() {
    return html`<section class="panel mapping">
      <div class="fields">
        <div class="field"><label for="mset">Mapping-Set</label>${this.choice("mset", "3")}</div>
        <div class="field"><label for="mgrid">MM-Grid</label>${this.text("mgrid", "39837")}</div>
        <div class="field"><label for="mbez">Bez.</label>${this.text("mbez", "Assembly", "muted")}</div>
      </div>
      ${this.find()}
    </section>`;
  }

  private propGrid() {
    return html`<section class="panel grid-panel props">
      <div class="view"><table>
        <colgroup><col width="17"><col width="120"><col width="120"><col width="80"><col width="60"><col width="60"><col width="60"><col width="121"><col></colgroup>
        <thead><tr><th></th><th><button class="sort">ID ${caret("up", "")}</button></th><th>Bez.</th><th>Typ</th><th>Exact</th><th>Ab</th><th>Bis</th><th>Text</th><th></th></tr></thead>
        <tbody>${this.props.map(([id, name], i) => {
          const current = i === 2;
          return html`<tr class=${classMap({ current })}>
            <td>${current ? caret("right", "marker") : nothing}</td><td>${id}</td><td>${name}</td>
            <td><span class="type"><select aria-label="Typ ${id}"><option>Char.</option></select>${caret("down")}</span></td>
            <td></td><td></td><td></td>
            <td class=${classMap({ edit: current })}>${current ? html`<input aria-label="Text">` : nothing}</td><td></td></tr>`;
        })}</tbody>
      </table></div>
      ${this.rail(false)}
    </section>`;
  }

  private fileGrid() {
    return html`<section class="panel grid-panel files">
      <div class="view"><table>
        <colgroup><col width="17"><col width="20"><col width="200"><col width="104"><col width="120"><col width="120"><col width="120"><col width="120"><col width="121"><col></colgroup>
        <thead><tr><th></th><th>.</th><th>Datei</th><th>.</th><th>ID.</th><th class="num">Nr.</th><th>Artikel</th><th>Part Number</th><th>Description</th><th></th></tr></thead>
        <tbody>${files.map((f) => html`<tr>
          <td></td><td class="kind">${f.kind === "iam" ? assemblyIcon : partIcon}</td><td>${f.file}</td>
          <td class="thumb"><div class="shot ${f.tone}"><svg viewBox="0 0 103 43" preserveAspectRatio="xMidYMid meet" role="img" aria-label=${f.file}>${f.art}</svg></div></td>
          <td>${f.id}</td><td class="num">${f.nr}</td><td></td><td>${f.part}</td><td>${f.desc}</td><td></td></tr>`)}</tbody>
      </table></div>
      ${this.rail(true)}
    </section>`;
  }

  render() {
    return html`
      <app-toolbar></app-toolbar>
      <div class="body">
        <app-sidebar></app-sidebar>
        <main>
          <div class="doc-tabs"><a href="#">PDM 3</a><button aria-label="Tab schließen">${icon(8, 8, "0 0 8 8", "#fff", svg`<path d="M1 1l6 6M7 1L1 7" stroke="currentColor" stroke-width="1.700"/>`)}</button></div>
          ${this.rootForm()}
          <nav class="tabs">${this.tabs.map((t) => html`<a href="#" class=${classMap({ active: t === this.active })} @click=${(e: Event) => this.pick(e, t)}>${t}</a>`)}</nav>
          <div class="split">${this.mapping()}${this.propGrid()}</div>
          ${this.fileGrid()}
        </main>
      </div>
      <footer><span class="dot"></span><span>test_v160 (dba)</span></footer>`;
  }
}
